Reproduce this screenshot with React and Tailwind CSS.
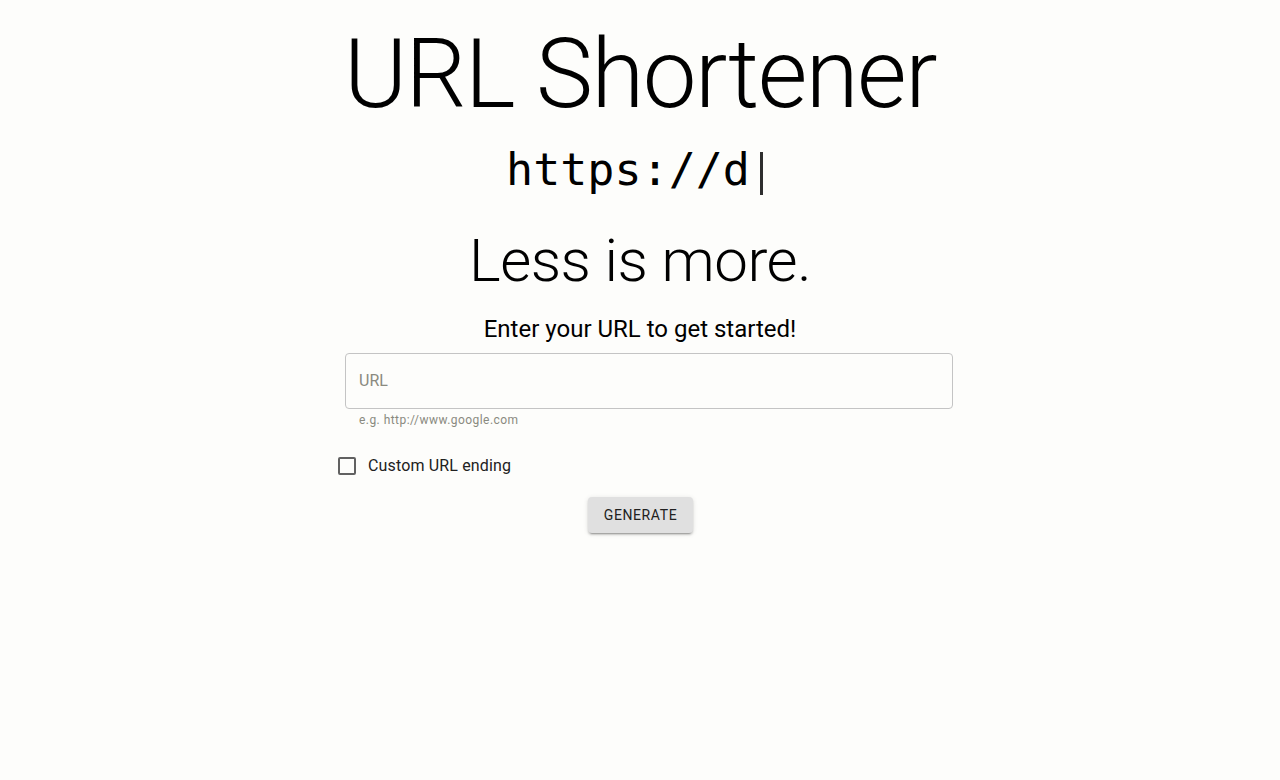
export default function App() {
  return (
    <div className="min-h-[780px] w-full bg-[#fdfdfb] font-['Roboto',sans-serif] text-[#212121]">
      <div className="flex flex-col items-center pt-[18px]">
        <h1 className="text-[96px] leading-[112px] font-light tracking-[-1.5px] text-black">URL Shortener</h1>
        <div className="mt-[12px] mr-[11px] font-['DejaVu_Sans_Mono',monospace] text-[45px] leading-[56px] text-black">
          https://d<span className="inline-block ml-[10px] w-[3px] h-[43px] bg-[#2e2e2e] align-[-10px]"></span>
        </div>
        <h2 className="mt-[27px] text-[60px] leading-[72px] font-light tracking-[-0.5px] text-black">Less is more.</h2>
        <p className="mt-[18px] text-[24px] leading-[28px] text-black">Enter your URL to get started!</p>
        <div className="w-[626px] mt-[10px]">
          <div className="ml-[18px] w-[608px] h-[56px] rounded-[4px] border border-[#c4c4c4] flex items-center px-[13px]">
            <span className="text-[16px] text-[#8a8a80]">URL</span>
          </div>
          <div className="ml-[32px] mt-[3px] text-[12px] leading-[16px] tracking-[0.45px] text-[#8a8a80]">e.g. http://www.google.com</div>
          <label className="mt-[17px] ml-[8px] h-[42px] flex items-center">
            <span className="w-[24px] h-[24px] flex items-center justify-center">
              <span className="block w-[18px] h-[18px] rounded-[2px] border-2 border-[#616161]"></span>
            </span>
            <span className="ml-[9px] text-[16px] text-[#212121] tracking-[0.15px]">Custom URL ending</span>
          </label>
        </div>
        <button className="mt-[10px] ml-[1px] h-[36px] px-[16px] rounded-[4px] bg-[#e0e0e0] text-[14px] font-normal tracking-[0.6px] uppercase text-[#212121] shadow-[0_3px_1px_-2px_rgba(0,0,0,0.2),0_2px_2px_0_rgba(0,0,0,0.14),0_1px_5px_0_rgba(0,0,0,0.12)]">
          Generate
        </button>
      </div>
    </div>
  );
}
